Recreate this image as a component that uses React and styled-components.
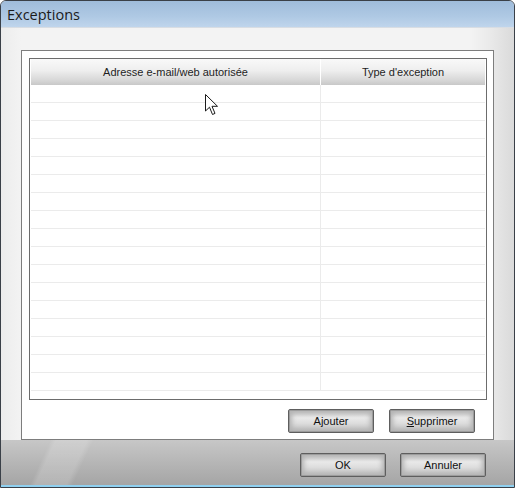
import styled, { createGlobalStyle } from "styled-components";

const GlobalStyle = createGlobalStyle`
  html, body {
    margin: 0;
    padding: 0;
    background: #ffffff;
  }
  * {
    box-sizing: border-box;
  }
`;

const Window = styled.div`
  width: 515px;
  height: 488px;
  display: flex;
  flex-direction: column;
  border: 1px solid #3a4048;
  border-radius: 6px 6px 0 0;
  overflow: hidden;
  position: relative;
  font-family: "Liberation Sans", Arial, sans-serif;
  background: linear-gradient(to bottom, #f1f1f1 0%, #e4e4e4 80%, #cdcdcd 100%);
  box-shadow: inset 1px 0 0 #cfe3f5, inset -1px 0 0 #cfe3f5;
`;

const TitleBar = styled.div`
  height: 27px;
  flex-shrink: 0;
  display: flex;
  align-items: center;
  padding-left: 6px;
  background: linear-gradient(to bottom, #9fbcdb 0%, #afc9e4 60%, #bfd5ec 100%);
  border-bottom: 1px solid #d8dde3;
  font-family: "Open Sans", "DejaVu Sans", sans-serif;
  font-size: 14.5px;
  color: #1b1b1b;
`;

const Main = styled.div`
  flex: 1;
  display: flex;
  flex-direction: column;
  padding: 22px 20px 0 20px;
  background: linear-gradient(to right, #ececec 0px, #f3f3f3 20px, #f3f3f3 470px, #e9e9e9 490px, #dadada 100%);
`;

const Panel = styled.div`
  height: 390px;
  background: #ffffff;
  border: 1px solid #7d7d7d;
  padding: 7px 6px 0 7px;
  display: flex;
  flex-direction: column;
`;

const Table = styled.div`
  position: relative;
  height: 342px;
  border: 1px solid #6c6c6c;
  padding: 0 1px;
  display: flex;
  flex-direction: column;
  overflow: hidden;
`;

const HeaderRow = styled.div`
  display: grid;
  grid-template-columns: 290px 1fr;
  height: 26px;
  background: linear-gradient(to bottom, #f9f9f9 0%, #eeeeee 45%, #d8d8d8 80%, #c8c8c8 100%);
`;

const HeaderCell = styled.div`
  display: flex;
  align-items: center;
  justify-content: center;
  font-size: 11px;
  color: #1e1e1e;
  border-right: ${(p) => (p.$divider ? "1px solid #ffffff" : "none")};
`;

const Row = styled.div`
  display: grid;
  grid-template-columns: 290px 1fr;
  height: 18px;
  border-bottom: 1px solid #ebebeb;
`;

const Cell = styled.div`
  border-right: ${(p) => (p.$divider ? "1px solid #ebebeb" : "none")};
`;

const Cursor = styled.svg`
  position: absolute;
  left: 175px;
  top: 35px;
`;

const ButtonRow = styled.div`
  display: flex;
  justify-content: flex-end;
  gap: 15px;
  padding: 9px 12px 0 0;
`;

const Footer = styled.div`
  height: 47px;
  display: flex;
  justify-content: flex-end;
  align-items: flex-start;
  gap: 14px;
  padding: 13px 28px 0 0;
  background:
    linear-gradient(115deg, rgba(255,255,255,0) 0px, rgba(255,255,255,0) 45px, rgba(255,255,255,0.16) 50px, rgba(255,255,255,0.16) 78px, rgba(255,255,255,0) 84px),
    linear-gradient(to bottom, #c7c7c7 0%, #b4b4b4 55%, #a5a5a5 100%);
  border-bottom: 2px solid #8fd0f0;
`;

const Button = styled.button`
  width: 86px;
  height: 24px;
  border: 1px solid #5e5e5e;
  border-radius: 2px;
  padding: 0;
  font-family: "Liberation Sans", Arial, sans-serif;
  font-size: 11px;
  color: #101010;
  background: linear-gradient(to bottom, #c4c4c4 0%, #e9e9e9 35%, #e0e0e0 55%, #c2c2c2 100%);
  box-shadow: inset 0 0 0 1px #9c9c9c, inset 0 0 5px 3px #b3b3b3;
  cursor: default;

  u {
    text-decoration: underline;
  }
`;

function Arrow() {
  return (
    <Cursor width="14" height="24" viewBox="0 0 14 24">
      <path
        d="M0.5 0.5 L0.5 17 L4.5 13.2 L7.5 20.5 L10 19.4 L7 12.3 L12.5 12.3 Z"
        fill="#ffffff"
        stroke="#1a1a1a"
        strokeWidth="1"
        strokeLinejoin="miter"
      />
    </Cursor>
  );
}

export default function App() {
  const rows = Array.from({ length: 17 }, (_, i) => i);
  return (
    <>
      <GlobalStyle />
      <Window>
        <TitleBar>Exceptions</TitleBar>
        <Main>
          <Panel>
            <Table>
              <HeaderRow>
                <HeaderCell $divider>Adresse e-mail/web autorisée</HeaderCell>
                <HeaderCell>Type d'exception</HeaderCell>
              </HeaderRow>
              {rows.map((r) => (
                <Row key={r}>
                  <Cell $divider />
                  <Cell />
                </Row>
              ))}
              <Arrow />
            </Table>
            <ButtonRow>
              <Button>Ajouter</Button>
              <Button>
                <u>S</u>upprimer
              </Button>
            </ButtonRow>
          </Panel>
        </Main>
        <Footer>
          <Button>OK</Button>
          <Button>Annuler</Button>
        </Footer>
      </Window>
    </>
  );
}
